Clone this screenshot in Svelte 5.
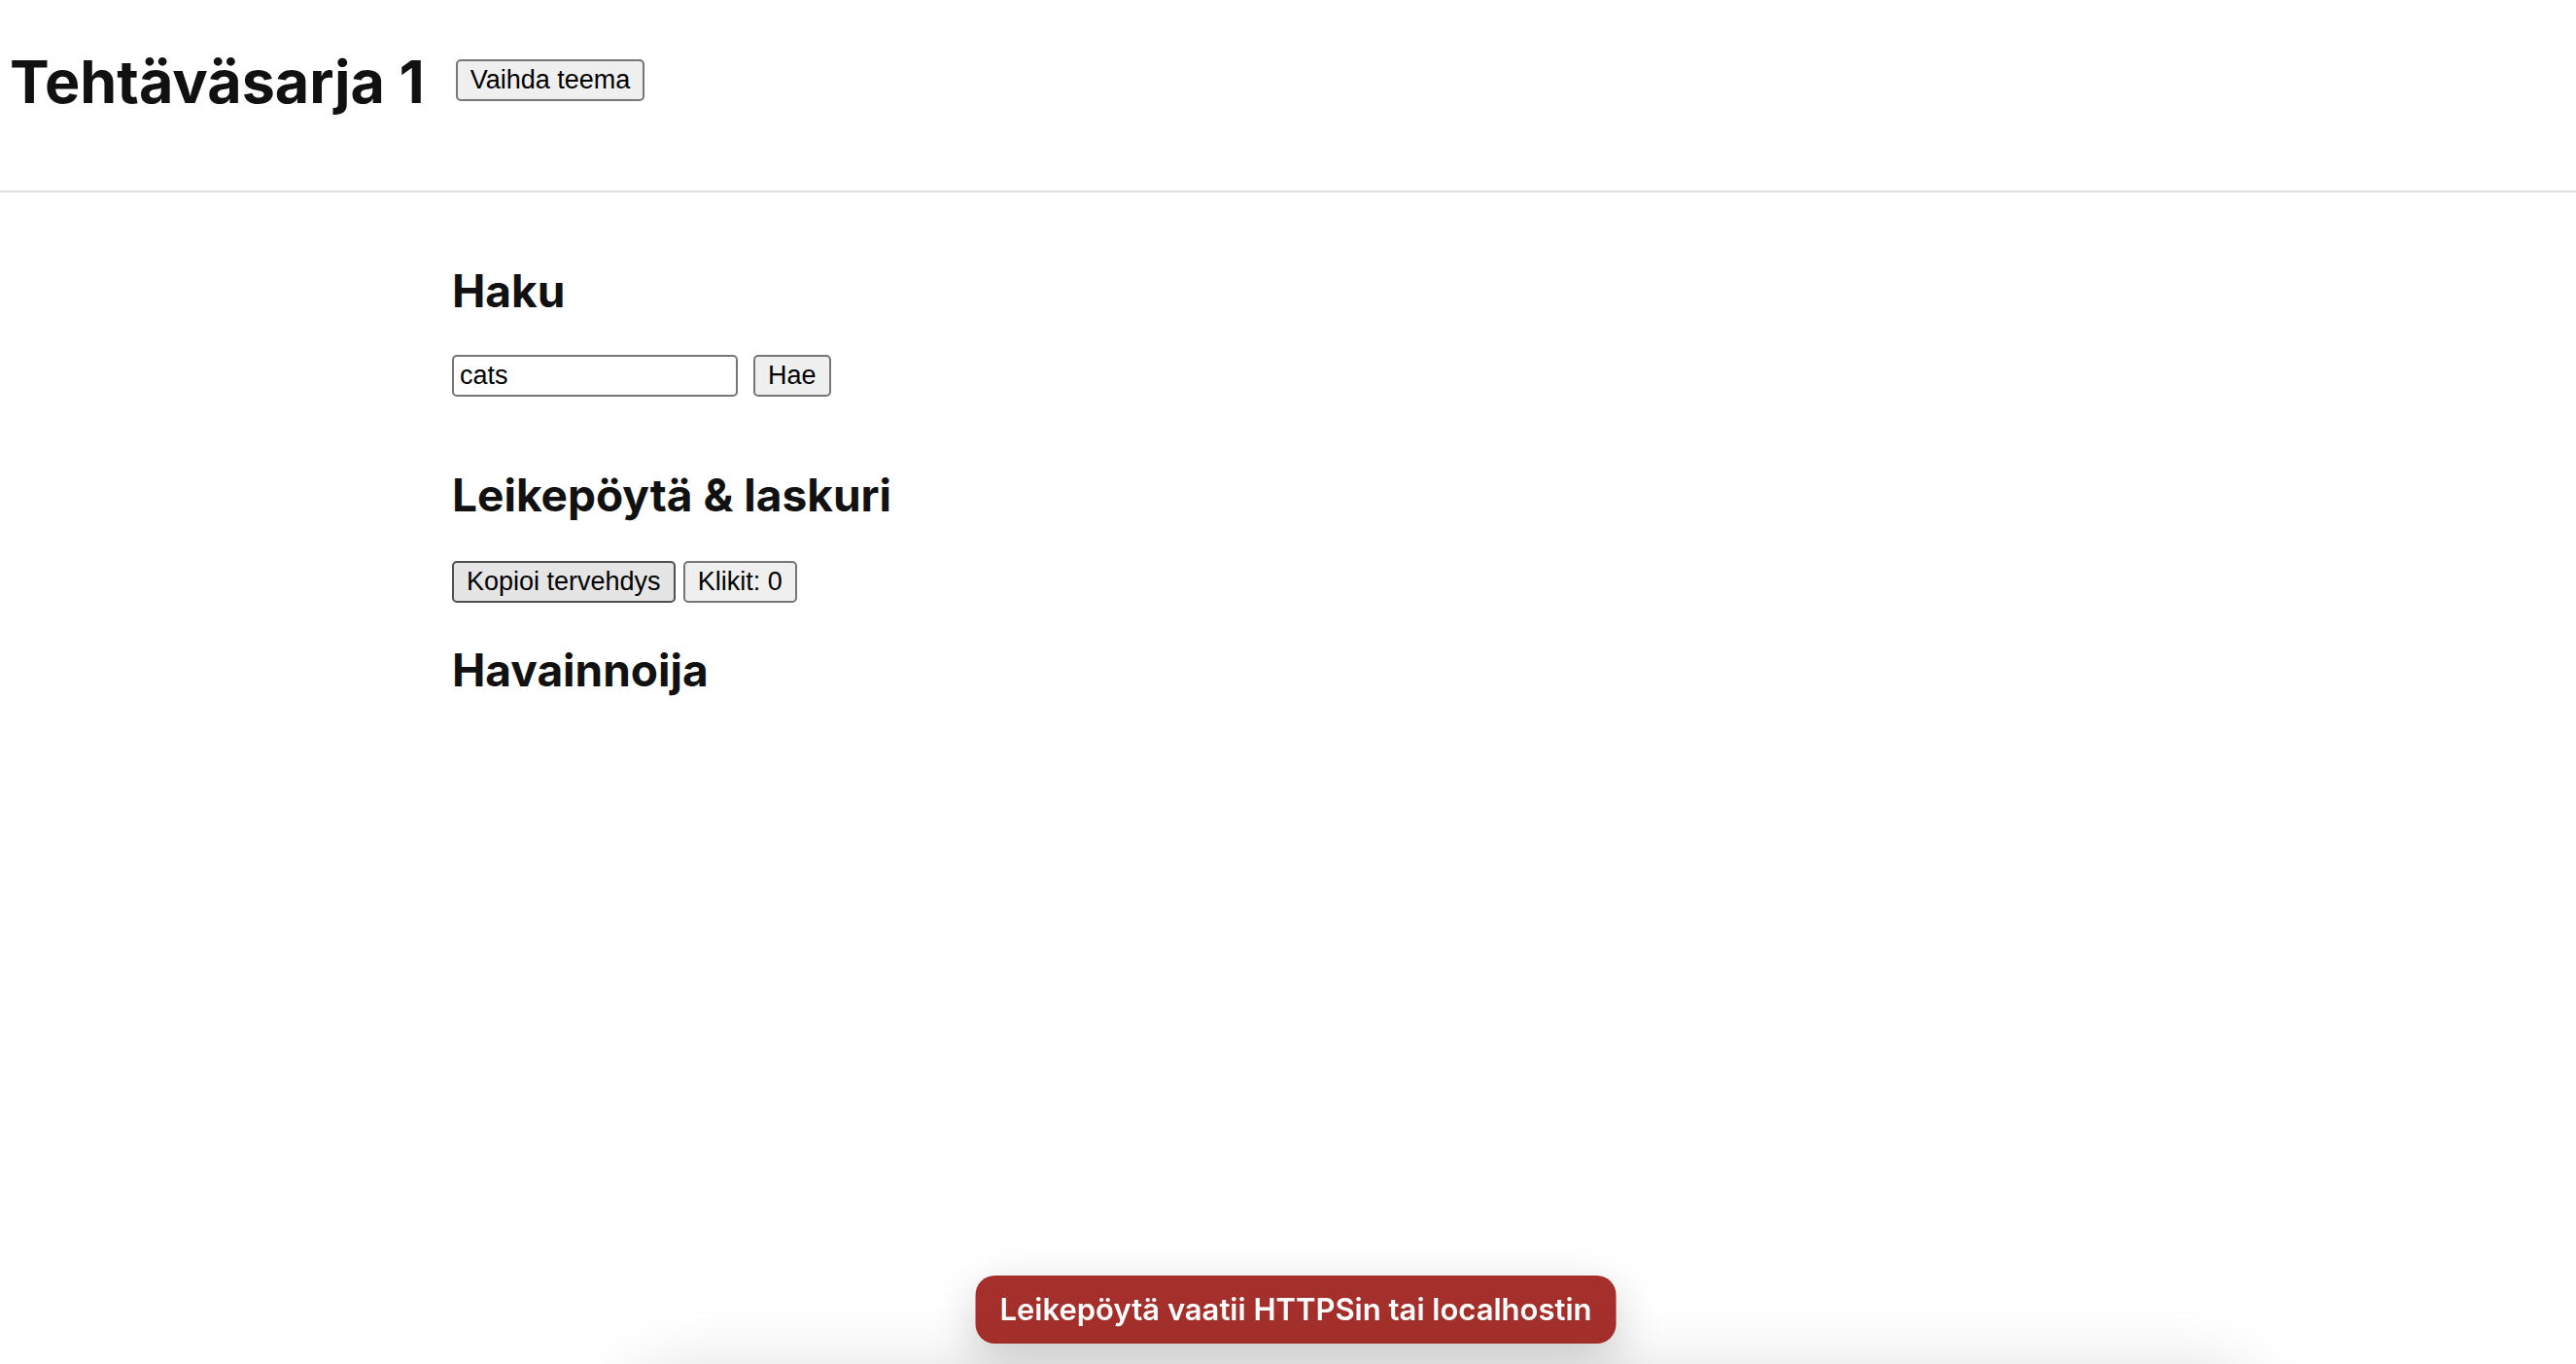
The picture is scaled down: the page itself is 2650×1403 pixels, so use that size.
<script>
  let query = $state('cats');
  let clicks = $state(0);
  let dark = $state(false);
  let message = $state('Leikepöytä vaatii HTTPSin tai localhostin');

  async function copyGreeting() {
    try {
      await navigator.clipboard.writeText('Hei!');
      message = 'Tervehdys kopioitu';
    } catch {
      message = 'Leikepöytä vaatii HTTPSin tai localhostin';
    }
  }
</script>

<div class="page" class:dark>
  <header>
    <h1>Tehtäväsarja 1</h1>
    <button type="button" onclick={() => (dark = !dark)}>Vaihda teema</button>
  </header>

  <main>
    <section class="search">
      <h2>Haku</h2>
      <form onsubmit={(e) => e.preventDefault()}>
        <input type="text" aria-label="Haku" bind:value={query} />
        <button type="submit">Hae</button>
      </form>
    </section>

    <section>
      <h2>Leikepöytä &amp; laskuri</h2>
      <div class="actions">
        <button type="button" class="active" onclick={copyGreeting}>Kopioi tervehdys</button>
        <button type="button" onclick={() => clicks++}>Klikit: {clicks}</button>
      </div>
    </section>

    <section>
      <h2>Havainnoija</h2>
    </section>
  </main>

  <div class="toast" role="status">{message}</div>
  <div class="glow"></div>
</div>

<style>
  :global(body) {
    margin: 0;
    background: #fff;
  }

  .page {
    min-height: 100vh;
    box-sizing: border-box;
    color: #111;
    font-family: Inter, 'Liberation Sans', sans-serif;
    overflow: hidden;
  }

  .page.dark {
    background: #111;
    color: #eee;
  }

  header {
    display: flex;
    align-items: flex-start;
    gap: 32px;
    padding: 44px 10px 72px;
    border-bottom: 2px solid #ddd;
  }

  h1,
  h2 {
    margin: 0;
    font-weight: 700;
  }

  h1 {
    font-size: 61px;
    line-height: 80px;
  }

  h2 {
    font-size: 46px;
    line-height: 56px;
  }

  header button {
    margin-top: 17px;
  }

  main {
    max-width: 1720px;
    margin: 0 auto;
    padding-top: 73px;
  }

  section {
    margin-bottom: 41px;
  }

  .search {
    margin-bottom: 73px;
  }

  form,
  .actions {
    display: flex;
  }

  form {
    gap: 16px;
    margin-top: 38px;
  }

  .actions {
    gap: 8px;
    margin-top: 40px;
  }

  button,
  input {
    box-sizing: border-box;
    height: 43px;
    border: 2px solid #767676;
    border-radius: 5px;
    font: 27px/36px 'Liberation Sans', Arial, sans-serif;
    color: #000;
  }

  button {
    padding: 0 13px 2px;
    background: #efefef;
  }

  button.active {
    background: #e5e5e5;
    border-color: #4f4f4f;
  }

  input {
    width: 294px;
    padding: 0 6px;
    background: #fff;
  }

  .toast {
    position: fixed;
    left: calc(50% + 8px);
    bottom: 21px;
    transform: translateX(-50%);
    padding: 15px 25px;
    border-radius: 20px;
    background: #a5302b;
    color: #fff;
    font-size: 31px;
    font-weight: 600;
    line-height: 40px;
    white-space: nowrap;
    box-shadow: 0 16px 48px rgba(0, 0, 0, 0.2);
  }

  .glow {
    position: fixed;
    top: 100%;
    left: 25%;
    right: 13%;
    height: 80px;
    margin-top: 20px;
    box-shadow: 0 0 80px rgba(0, 0, 0, 0.2);
    pointer-events: none;
  }
</style>
